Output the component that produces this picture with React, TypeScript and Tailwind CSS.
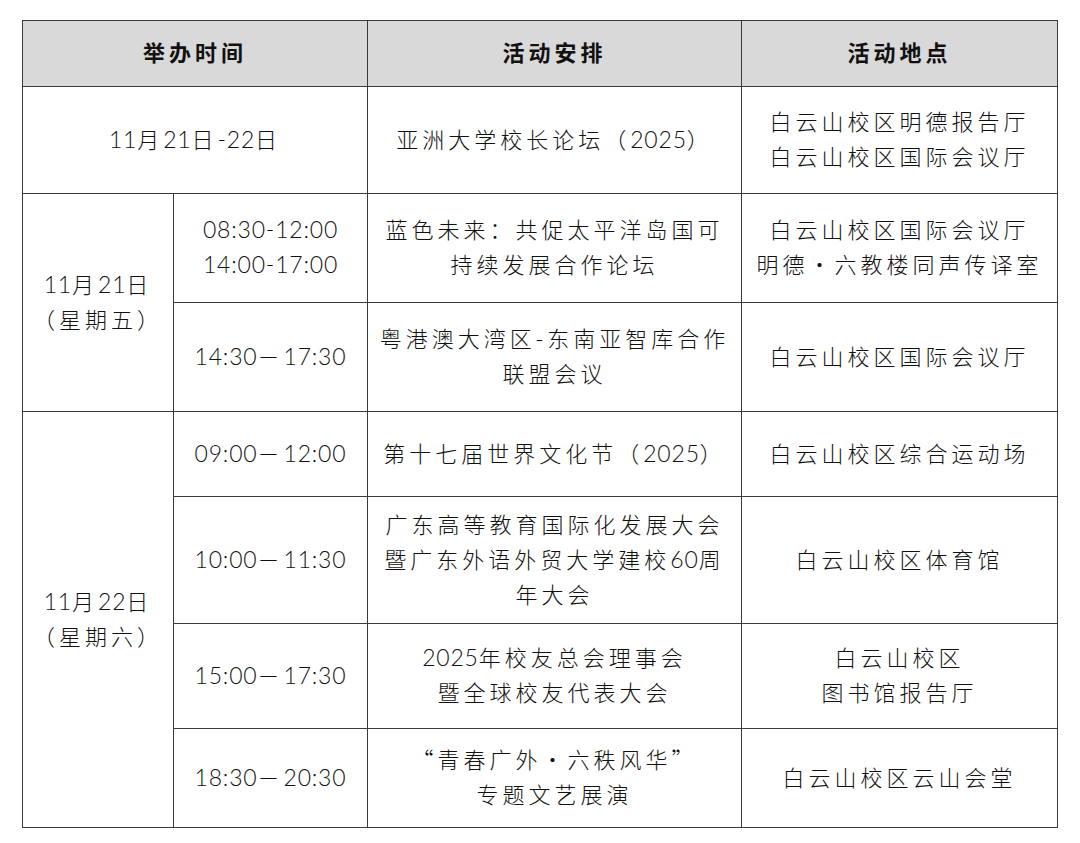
import React from "react";

const NUM = /([0-9:.\-]+)/;

function T({ text }: { text: string }) {
  const parts = text.split(NUM);
  return (
    <>
      {parts.map((p, i) =>
        p === "" ? null : /[0-9]/.test(p) ? (
          <span
            key={i}
            className="tracking-[0.8px] text-[23px] leading-[35px]"
            style={{ fontFamily: 'Lato, "Noto Sans CJK SC", sans-serif' }}
          >
            {p}
          </span>
        ) : (
          <span key={i}>{p}</span>
        )
      )}
    </>
  );
}

function Cell({
  lines,
  className = "",
  head = false,
}: {
  lines: string[];
  className?: string;
  head?: boolean;
}) {
  return (
    <div
      className={
        "flex flex-col items-center justify-center text-center border-r border-b border-[#3a3a3a] whitespace-nowrap leading-[35px] pb-[4px] " +
        (head ? "bg-[#d9d9d9] font-bold " : "font-light ") +
        className
      }
    >
      {lines.map((l, i) => (
        <div key={i} className="h-[35px]">
          <T text={l} />
        </div>
      ))}
    </div>
  );
}

export default function App() {
  return (
    <div className="w-[1080px] h-[843px] bg-white pt-[20px] pl-[22px]">
      <div
        className="grid grid-cols-[151px_194px_374px_316px] grid-rows-[66px_107px_109px_109px_85px_127px_105px_99px] w-[1036px] border-l border-t border-[#3a3a3a] text-[22px] tracking-[4px] text-[#111]"
        style={{ fontFamily: '"Noto Sans CJK SC", sans-serif' }}
      >
        <Cell head className="col-span-2" lines={["举办时间"]} />
        <Cell head lines={["活动安排"]} />
        <Cell head lines={["活动地点"]} />

        <Cell className="col-span-2" lines={["11月21日-22日"]} />
        <Cell lines={["亚洲大学校长论坛（2025）"]} />
        <Cell lines={["白云山校区明德报告厅", "白云山校区国际会议厅"]} />

        <Cell className="row-span-2" lines={["11月21日", "（星期五）"]} />
        <Cell lines={["08:30-12:00", "14:00-17:00"]} />
        <Cell lines={["蓝色未来：共促太平洋岛国可", "持续发展合作论坛"]} />
        <Cell lines={["白云山校区国际会议厅", "明德・六教楼同声传译室"]} />

        <Cell lines={["14:30－17:30"]} />
        <Cell lines={["粤港澳大湾区-东南亚智库合作", "联盟会议"]} />
        <Cell lines={["白云山校区国际会议厅"]} />

        <Cell className="row-span-4" lines={["11月22日", "（星期六）"]} />
        <Cell lines={["09:00－12:00"]} />
        <Cell lines={["第十七届世界文化节（2025）"]} />
        <Cell lines={["白云山校区综合运动场"]} />

        <Cell lines={["10:00－11:30"]} />
        <Cell
          lines={[
            "广东高等教育国际化发展大会",
            "暨广东外语外贸大学建校60周",
            "年大会",
          ]}
        />
        <Cell lines={["白云山校区体育馆"]} />

        <Cell lines={["15:00－17:30"]} />
        <Cell lines={["2025年校友总会理事会", "暨全球校友代表大会"]} />
        <Cell lines={["白云山校区", "图书馆报告厅"]} />

        <Cell lines={["18:30－20:30"]} />
        <Cell lines={["“青春广外・六秩风华”", "专题文艺展演"]} />
        <Cell lines={["白云山校区云山会堂"]} />
      </div>
    </div>
  );
}
